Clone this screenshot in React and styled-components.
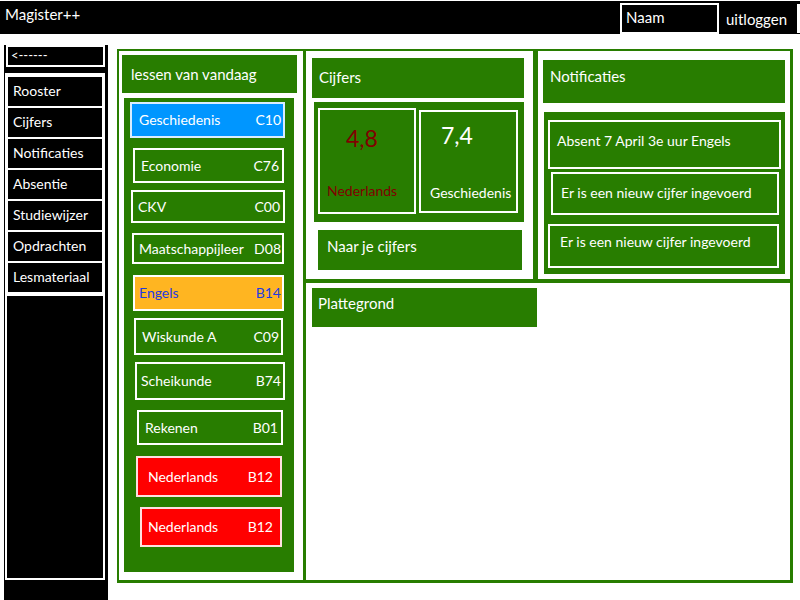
import React from 'react';
import styled, { createGlobalStyle } from 'styled-components';

const GREEN = '#287d00';

const GlobalStyle = createGlobalStyle`
  body {
    margin: 0;
    background: #fff;
    font-family: Lato, "Open Sans", sans-serif;
    color: #fff;
  }
`;

const lessons = [
  { name: 'Geschiedenis', room: 'C10', tone: 'blue', ml: 6, mr: 9, h: 36, mt: 4, pl: 9, pr: 4 },
  { name: 'Economie', room: 'C76', tone: 'green', ml: 9, mr: 10, h: 35, mt: 10, pl: 8, pr: 5 },
  { name: 'CKV', room: 'C00', tone: 'green', ml: 7, mr: 9, h: 33, mt: 7, pl: 7, pr: 5 },
  { name: 'Maatschappijleer', room: 'D08', tone: 'green', ml: 8, mr: 10, h: 31, mt: 10, pl: 7, pr: 3 },
  { name: 'Engels', room: 'B14', tone: 'orange', ml: 9, mr: 10, h: 36, mt: 11, pl: 6, pr: 3 },
  { name: 'Wiskunde A', room: 'C09', tone: 'green', ml: 10, mr: 11, h: 37, mt: 7, pl: 8, pr: 4 },
  { name: 'Scheikunde', room: 'B74', tone: 'green', ml: 11, mr: 9, h: 38, mt: 7, pl: 6, pr: 4 },
  { name: 'Rekenen', room: 'B01', tone: 'green', ml: 13, mr: 11, h: 35, mt: 10, pl: 8, pr: 5 },
  { name: 'Nederlands', room: 'B12', tone: 'red', ml: 12, mr: 12, h: 41, mt: 11, pl: 12, pr: 9 },
  { name: 'Nederlands', room: 'B12', tone: 'red', ml: 16, mr: 12, h: 40, mt: 10, pl: 8, pr: 9 },
];

const tones = {
  green: { bg: GREEN, border: '#fff', text: '#fff' },
  blue: { bg: '#0096ff', border: '#d8ecff', text: '#fff' },
  orange: { bg: '#ffb521', border: '#fff', text: '#1f3ce0' },
  red: { bg: '#ff0000', border: '#ffe0e0', text: '#fff' },
};

const menuItems = ['Rooster', 'Cijfers', 'Notificaties', 'Absentie', 'Studiewijzer', 'Opdrachten', 'Lesmateriaal'];

const notifications = [
  { text: 'Absent 7 April 3e uur Engels', ml: 4, mr: 4, h: 49, mt: 8, pl: 7, pt: 9 },
  { text: 'Er is een nieuw cijfer ingevoerd', ml: 7, mr: 6, h: 43, mt: 3, pl: 8, pt: 9 },
  { text: 'Er is een nieuw cijfer ingevoerd', ml: 4, mr: 6, h: 44, mt: 9, pl: 10, pt: 6 },
];

const Page = styled.div`
  width: 800px;
  height: 600px;
  display: flex;
  flex-direction: column;
  overflow: hidden;
`;

const TopBar = styled.header`
  height: 33px;
  margin-top: 1px;
  background: #000;
  display: flex;
  align-items: flex-start;
  font-size: 15px;
`;

const Brand = styled.div`
  padding: 3px 0 0 5px;
  line-height: 20px;
`;

const UserBox = styled.div`
  margin: 2px 0 0 auto;
  width: 91px;
  height: 25px;
  border: 2px solid #fff;
  padding: 2px 0 0 4px;
  line-height: 20px;
`;

const Logout = styled.div`
  width: 79px;
  height: 29px;
  margin: 3px 0 0 2px;
  border-right: 3px solid #fff;
  padding: 5px 0 0 5px;
  box-sizing: border-box;
  line-height: 20px;
`;

const Body = styled.div`
  flex: 1;
  display: flex;
  align-items: flex-start;
  padding: 11px 0 0 4px;
`;

const Sidebar = styled.nav`
  width: 104px;
  height: 555px;
  background: #000;
  display: flex;
  flex-direction: column;
  padding-bottom: 20px;
  box-sizing: border-box;
  font-size: 14px;
`;

const BackButton = styled.div`
  height: 18px;
  margin: 0 3px 0 2px;
  border: 2px solid #fff;
  font-size: 13px;
  line-height: 16px;
  padding-left: 3px;
`;

const Menu = styled.div`
  margin: 6px 3px 0 1px;
  background: #fff;
  padding: 4px 3px 2px;
  display: flex;
  flex-direction: column;
  gap: 2px;
`;

const MenuItem = styled.div`
  height: 29px;
  background: #000;
  padding-left: 5px;
  line-height: 28px;
`;

const SideFiller = styled.div`
  flex: 1;
  margin: 0 3px 0 1px;
  border: 2px solid #fff;
  background: #000;
`;

const Main = styled.main`
  width: 671px;
  height: 529px;
  margin: 4px 0 0 9px;
  padding: 2px 3px 3px 2px;
  background: ${GREEN};
  display: grid;
  grid-template-columns: 184px 1fr;
  gap: 3px;
`;

const Panel = styled.section`
  background: #fff;
  display: flex;
  flex-direction: column;
  padding: ${(p) => p.$pad};
`;

const RightArea = styled.div`
  display: grid;
  grid-template-rows: 228px 1fr;
  gap: 4px;
`;

const TopRow = styled.div`
  display: grid;
  grid-template-columns: 227px 1fr;
  gap: 5px;
`;

const PanelHeader = styled.div`
  background: ${GREEN};
  height: ${(p) => p.$h}px;
  box-sizing: border-box;
  padding: ${(p) => p.$pt}px 0 0 ${(p) => p.$pl}px;
  margin: ${(p) => p.$margin};
  width: ${(p) => p.$w || 'auto'};
  font-size: 15px;
  line-height: 20px;
`;

const GreenBlock = styled.div`
  background: ${GREEN};
  margin: ${(p) => p.$margin};
  padding: ${(p) => p.$pad};
  display: flex;
  flex-direction: ${(p) => p.$dir || 'column'};
  gap: ${(p) => p.$gap || 0}px;
  height: ${(p) => (p.$h ? `${p.$h}px` : 'auto')};
  box-sizing: border-box;
`;

const LessonList = styled(GreenBlock)`
  flex: 1;
`;

const Lesson = styled.div`
  height: ${(p) => p.$h}px;
  margin: ${(p) => p.$mt}px ${(p) => p.$mr}px 0 ${(p) => p.$ml}px;
  box-sizing: border-box;
  background: ${(p) => tones[p.$tone].bg};
  border: 2px solid ${(p) => tones[p.$tone].border};
  color: ${(p) => tones[p.$tone].text};
  display: flex;
  align-items: center;
  justify-content: space-between;
  padding: 0 ${(p) => p.$pr - 2}px 1px ${(p) => p.$pl - 2}px;
  font-size: 14px;
`;

const GradeCard = styled.div`
  width: ${(p) => p.$w}px;
  height: ${(p) => p.$h}px;
  margin-top: ${(p) => p.$mt}px;
  box-sizing: border-box;
  border: 2px solid #fff;
  display: flex;
  flex-direction: column;
  justify-content: space-between;
  color: ${(p) => p.$color};
  padding: ${(p) => p.$pt}px 0 ${(p) => p.$pb}px 0;
`;

const Grade = styled.div`
  font-size: 23px;
  line-height: 30px;
  padding-left: ${(p) => p.$pl}px;
`;

const GradeLabel = styled.div`
  font-size: 14px;
  line-height: 20px;
  padding-left: ${(p) => p.$pl}px;
  white-space: nowrap;
`;

const LinkBar = styled.div`
  background: ${GREEN};
  height: 40px;
  margin: 8px 11px 0 12px;
  padding: 6px 0 0 9px;
  box-sizing: border-box;
  font-size: 15px;
  line-height: 20px;
`;

const Notice = styled.div`
  height: ${(p) => p.$h}px;
  margin: ${(p) => p.$mt}px ${(p) => p.$mr}px 0 ${(p) => p.$ml}px;
  box-sizing: border-box;
  border: 2px solid #fff;
  padding: ${(p) => p.$pt}px 0 0 ${(p) => p.$pl}px;
  font-size: 14px;
  line-height: 20px;
  white-space: nowrap;
`;

export default function App() {
  return (
    <Page>
      <GlobalStyle />
      <TopBar>
        <Brand>Magister++</Brand>
        <UserBox>Naam</UserBox>
        <Logout>uitloggen</Logout>
      </TopBar>

      <Body>
        <Sidebar>
          <BackButton>&lt;------</BackButton>
          <Menu>
            {menuItems.map((item) => (
              <MenuItem key={item}>{item}</MenuItem>
            ))}
          </Menu>
          <SideFiller />
        </Sidebar>

        <Main>
          <Panel $pad="4px 0 8px 0">
            <PanelHeader $h={38} $pt={9} $pl={9} $margin="0 6px 0 3px">
              lessen van vandaag
            </PanelHeader>
            <LessonList $margin="5px 9px 0 5px" $pad="0">
              {lessons.map((l, i) => (
                <Lesson
                  key={i}
                  $tone={l.tone}
                  $h={l.h}
                  $mt={l.mt}
                  $ml={l.ml}
                  $mr={l.mr}
                  $pl={l.pl}
                  $pr={l.pr}
                >
                  <span>{l.name}</span>
                  <span>{l.room}</span>
                </Lesson>
              ))}
            </LessonList>
          </Panel>

          <RightArea>
            <TopRow>
              <Panel $pad="7px 0 0 0">
                <PanelHeader $h={40} $pt={9} $pl={7} $margin="0 9px 0 6px">
                  Cijfers
                </PanelHeader>
                <GreenBlock $margin="4px 9px 0 8px" $pad="0 0 0 4px" $dir="row" $gap={3} $h={120}>
                  <GradeCard $w={98} $h={106} $mt={6} $color="#800000" $pt={13} $pb={11}>
                    <Grade $pl={26}>4,8</Grade>
                    <GradeLabel $pl={7}>Nederlands</GradeLabel>
                  </GradeCard>
                  <GradeCard $w={99} $h={103} $mt={8} $color="#fff" $pt={8} $pb={8}>
                    <Grade $pl={20}>7,4</Grade>
                    <GradeLabel $pl={9}>Geschiedenis</GradeLabel>
                  </GradeCard>
                </GreenBlock>
                <LinkBar>Naar je cijfers</LinkBar>
              </Panel>

              <Panel $pad="9px 0 0 0">
                <PanelHeader $h={43} $pt={6} $pl={7} $margin="0 5px 0 5px">
                  Notificaties
                </PanelHeader>
                <GreenBlock $margin="9px 5px 0 6px" $pad="0 0 6px 0" $h={162}>
                  {notifications.map((n, i) => (
                    <Notice key={i} $h={n.h} $mt={n.mt} $ml={n.ml} $mr={n.mr} $pl={n.pl} $pt={n.pt}>
                      {n.text}
                    </Notice>
                  ))}
                </GreenBlock>
              </Panel>
            </TopRow>

            <Panel $pad="5px 0 0 0">
              <PanelHeader $h={39} $pt={5} $pl={6} $margin="0 0 0 6px" $w="225px">
                Plattegrond
              </PanelHeader>
            </Panel>
          </RightArea>
        </Main>
      </Body>
    </Page>
  );
}
